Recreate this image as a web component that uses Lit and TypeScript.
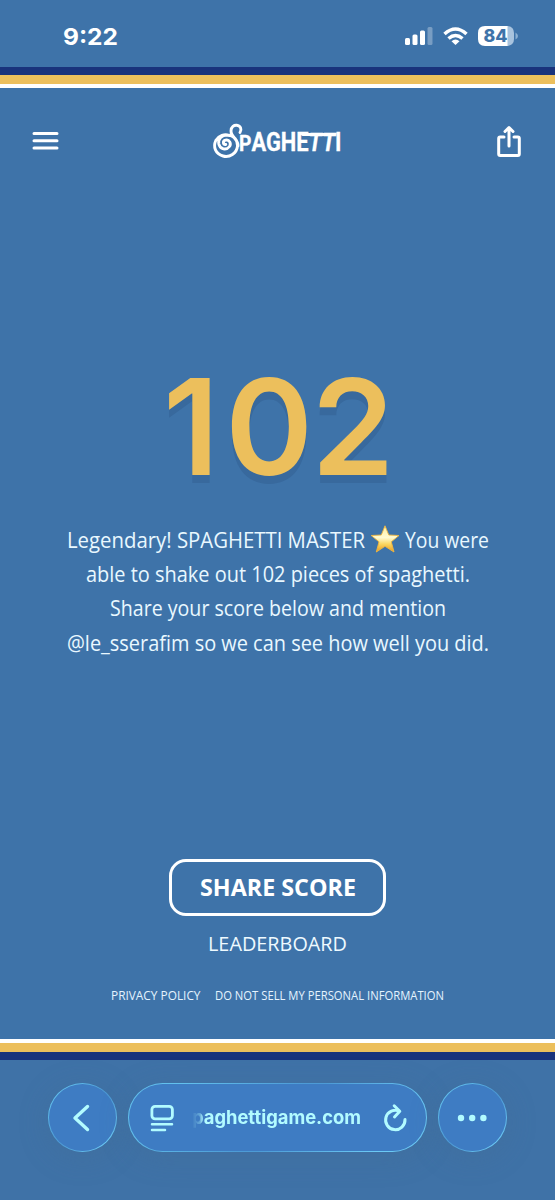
import { LitElement, html, svg, css } from "lit";
import { customElement, property } from "lit/decorators.js";

/** A single line of text set to an exact measure. */
@customElement("fit-text")
class FitText extends LitElement {
  @property() text = "";
  @property({ type: Number }) width = 100;
  @property({ type: Number }) size = 16;

  static styles = css`
    :host { display: block; flex: none; }
    svg { display: block; overflow: visible; }
    text { fill: currentColor; }
  `;

  render() {
    const h = Math.round(this.size);
    return html`<svg width=${this.width} height=${h}>
      <text x="0" y=${h - 3} font-size=${this.size} textLength=${this.width}
        lengthAdjust="spacingAndGlyphs">${this.text}</text>
    </svg>`;
  }
}

@customElement("app-root")
class AppRoot extends LitElement {
  static styles = css`
    * { box-sizing: border-box; }
    :host {
      display: flex;
      flex-direction: column;
      width: 555px;
      height: 1200px;
      overflow: hidden;
      background: #3e73a9;
      border-right: 1px solid #28598c;
      color: #fff;
      font-family: "Open Sans", "Noto Sans", sans-serif;
    }
    svg { display: block; flex: none; overflow: visible; }
    .status {
      height: 67px;
      padding: 5px 37px 0 63px;
      display: flex;
      align-items: center;
      justify-content: space-between;
      font-family: Inter, sans-serif;
      font-weight: 700;
    }
    .stripes { display: flex; flex-direction: column; flex: none; }
    .stripes.flip { flex-direction: column-reverse; }
    .navy { height: 8.4px; background: #19337c; }
    .gold { height: 8.4px; background: #ecbf5c; }
    .white { height: 4.6px; background: #fff; }
    header {
      height: 106px;
      padding: 0 33px 0 32px;
      display: grid;
      grid-template-columns: 180px 1fr 24px;
      align-items: center;
    }
    main { flex: 1; display: flex; flex-direction: column; align-items: center; }
    .score {
      margin: 183px 0 0;
      font-family: Inter, sans-serif;
      font-weight: 600;
      font-size: 133px;
      fill: #ecbf5c;
      text-shadow: 0 8px 0 #38699d;
    }
    .message {
      margin-top: 47px;
      display: flex;
      flex-direction: column;
      align-items: center;
      color: #e9f8ff;
    }
    .row { height: 34.2px; display: flex; align-items: center; gap: 6px; }
    .share {
      margin-top: 200px;
      width: 217px;
      height: 57px;
      border: 3px solid #fff;
      border-radius: 17px;
      background: none;
      color: #fff;
      font: 700 23px "Open Sans", sans-serif;
      padding: 0;
      display: flex;
      align-items: center;
      justify-content: center;
    }
    .board { margin-top: 18px; color: #eefaff; }
    .legal { margin-top: 36px; display: flex; gap: 14px; color: #e5f4ff; }
    .browser {
      height: 140px;
      padding: 23px 48px 0 48px;
      display: flex;
      gap: 11px;
      background: #3f72a7;
      color: #b2fbff;
    }
    .glass {
      height: 69px;
      border-radius: 35px;
      border: 1.5px solid transparent;
      background:
        linear-gradient(#3e7cc3, #3e7cc3) padding-box,
        linear-gradient(135deg, #62c0ed 15%, #4d9bd6 48%, #4d9bd6 54%, #6bc9f5 86%) border-box;
      display: flex;
      align-items: center;
      justify-content: center;
      flex: none;
      box-shadow: 0 5px 28px rgba(68, 108, 145, 0.35);
    }
    .round { width: 69px; }
    .address { width: 299px; justify-content: space-between; padding: 0 19px 0 21px; }
    .url {
      width: 170px;
      padding: 5px 0;
      margin-left: -4px;
      font-family: Inter, sans-serif;
      font-weight: 650;
      mask-image: linear-gradient(90deg, transparent 0, rgba(0,0,0,.35) 8px, #000 11px);
    }
    .wordmark { font: 700 24px Roboto, sans-serif; fill: #fff; }
    .slant { font-style: italic; }
  `;

  private signal() {
    return svg`
      <g fill="#fff">
        <rect x="0" y="12" width="5" height="7" rx="1.5"/>
        <rect x="7.5" y="8.5" width="5" height="10.5" rx="1.5"/>
        <rect x="15" y="4.5" width="5" height="14.5" rx="1.5"/>
        <rect x="22.5" y="1" width="5" height="18" rx="1.5" opacity=".3"/>
      </g>
      <g fill="none" stroke="#fff" stroke-width="3.5">
        <path d="M39.5 8Q50.5-2 61.5 8"/>
        <path d="M43.5 12.5Q50.5 6.5 57.5 12.5"/>
      </g>
      <path d="M50.5 19L46.5 15.2Q50.5 12 54.5 15.2Z" fill="#fff"/>
      <path d="M80 0H103V20H80Q73 20 73 13V7Q73 0 80 0Z" fill="#fff"/>
      <path d="M102.500 0Q109 1 109 7V13Q109 19 102.500 20Z" fill="#a8c3de"/>
      <path d="M110.5 6.5Q113 8 113 10Q113 12 110.5 13.5Z" fill="#8bb0d3"/>
      <text x="78.5" y="16.3" font-size="17.5" font-weight="800" textLength="24" lengthAdjust="spacingAndGlyphs" fill="#3e73a9">84</text>`;
  }

  render() {
    return html`
      <div class="status">
        <fit-text text="9:22" width="55" size="23.5"></fit-text>
        <svg width="113" height="20">${this.signal()}</svg>
      </div>
      <div class="stripes">
        <div class="navy"></div><div class="gold"></div><div class="white"></div>
      </div>
      <header>
        <svg width="28" height="20" stroke="#fff" stroke-width="3" stroke-linecap="round">
          <path d="M2 2.500H25M2 9.700H25M2 16.900H25"/>
        </svg>
        <svg class="wordmark" width="129" height="36" viewBox="212 123 129 36">
          <path d="M225.800 144.500C223 144.800 222.300 141 225.500 140.200C229.500 139.200 231.500 143.500 229.500 146.500C226.500 150.500 220 149.500 218.800 144C217.800 138.500 222 135 227 135C234 135 238 140.500 237.500 146C236.800 153.500 229.500 157.800 223 156C215.500 154 212.800 147 215.800 140.500C218.500 135.500 225 133.500 229 135.500M238 146C238.500 139.500 231 137 231 131C231 126.500 234.200 125 236.800 125.300C240.800 125.800 242 129.500 240 132.500"
            fill="none" stroke="#fff" stroke-width="2.900" stroke-linecap="round" stroke-linejoin="round"/>
          <text x="239" y="150.800" font-size="25" textLength="102.500" lengthAdjust="spacingAndGlyphs" stroke="#fff" stroke-width=".3"><tspan font-size="22">P</tspan>AGHE<tspan class="slant">TT</tspan>I</text>
          <path d="M303 134.500H330" stroke="#fff" stroke-width="3" stroke-linecap="round"/>
        </svg>
        <svg width="24" height="33" fill="none" stroke="#fff" stroke-width="3" stroke-linecap="round" stroke-linejoin="round">
          <path d="M6 12H2.200Q.7 12 .7 13.500V29Q.7 30.500 2.200 30.500H19.800Q21.300 30.500 21.300 29V13.500Q21.300 12 19.800 12H16M11 21V3M7 6.500L11 2.500L15 6.500"/>
        </svg>
      </header>
      <main>
        <svg class="score" width="222" height="98">
          <text x="-4 58.300 144.500" y="97.500">102</text>
        </svg>
        <div class="message">
          <div class="row">
            <fit-text text="Legendary! SPAGHETTI MASTER" width="298" size="22.6"></fit-text>
            <svg width="28" height="28" viewBox="0 0 28 28">
              <defs><linearGradient id="star" x1="0" y1="0" x2="0" y2="1">
                <stop offset="0" stop-color="#fff0a0"/><stop offset=".45" stop-color="#fffbd2"/>
                <stop offset=".7" stop-color="#fbd65f"/><stop offset="1" stop-color="#e79a20"/>
              </linearGradient></defs>
              <path d="M14 .8L17.800 10L28 10.500L20.300 16.800L23 27L14 21.300L5.300 27L8 16.800L.2 10.500L10.300 10Z"
                fill="url(#star)" stroke="#efb63f" stroke-width=".9" stroke-linejoin="round"/>
            </svg>
            <fit-text text="You were" width="84" size="22.6"></fit-text>
          </div>
          <div class="row"><fit-text text="able to shake out 102 pieces of spaghetti." width="384" size="22.6"></fit-text></div>
          <div class="row"><fit-text text="Share your score below and mention" width="336" size="22.6"></fit-text></div>
          <div class="row"><fit-text text="@le_sserafim so we can see how well you did." width="422" size="22.6"></fit-text></div>
        </div>
        <button class="share"><fit-text text="SHARE SCORE" width="156" size="23"></fit-text></button>
        <fit-text class="board" text="LEADERBOARD" width="139" size="20.3"></fit-text>
        <div class="legal">
          <fit-text text="PRIVACY POLICY" width="89.500" size="13.4"></fit-text>
          <fit-text text="DO NOT SELL MY PERSONAL INFORMATION" width="229" size="13.4"></fit-text>
        </div>
      </main>
      <div class="stripes flip">
        <div class="navy"></div><div class="gold"></div><div class="white"></div>
      </div>
      <div class="browser">
        <div class="glass round">
          <svg width="18" height="28" fill="none" stroke="currentColor" stroke-width="3.4" stroke-linecap="round" stroke-linejoin="round">
            <path d="M13.500 2.500L1 14L13.500 25.500"/>
          </svg>
        </div>
        <div class="glass address">
          <svg width="24" height="28" fill="none" stroke="currentColor" stroke-width="2.8" stroke-linecap="round">
            <rect x="1.9" y="2.4" width="20.5" height="12.5" rx="3.2"/>
            <path d="M2 20.3H22M2 26H15" stroke-width="2.5"/>
          </svg>
          <div class="url"><fit-text text="paghettigame.com" width="169" size="18.7"></fit-text></div>
          <svg width="24" height="28" fill="none" stroke="currentColor" stroke-width="3" stroke-linecap="round" stroke-linejoin="round">
            <path d="M22 15.500A9.700 9.700 0 1 1 16.500 7.200M11.200 1.800L16.800 7.300L11.500 13"/>
          </svg>
        </div>
        <div class="glass round">
          <svg width="30" height="8" fill="currentColor">
            <circle cx="3" cy="4" r="3.2"/><circle cx="14.2" cy="4" r="3.2"/><circle cx="25.4" cy="4" r="3.2"/>
          </svg>
        </div>
      </div>
    `;
  }
}
